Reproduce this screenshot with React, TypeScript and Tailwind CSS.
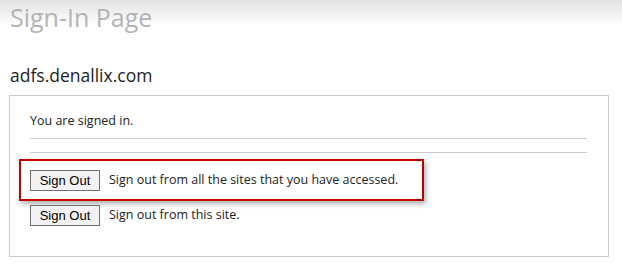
const ui = { fontFamily: '"Open Sans", "Noto Sans", sans-serif' }

function SignOutButton() {
  return (
    <button
      className="h-[21px] w-[70px] shrink-0 border border-[#707070] bg-[#f5f2f5] text-[13px] leading-none text-black"
      style={{ fontFamily: '"Liberation Sans", Arial, sans-serif' }}
    >
      Sign Out
    </button>
  )
}

export default function App() {
  return (
    <div
      className="h-[268px] w-[622px] overflow-hidden bg-[linear-gradient(#e2e2e2,#ffffff_26px)] px-[9px]"
      style={ui}
    >
      <h1 className="pl-[1px] pt-[1px] text-[25px] leading-[33px] text-[#b4b4b4]">Sign-In Page</h1>
      <h2 className="mt-[29px] pl-[1px] text-[17.5px] leading-[24px] text-[#1e1e1e]">adfs.denallix.com</h2>
      <div className="mt-[8px] h-[162px] w-[600px] border border-[#cccccc] pl-[20px] pr-[21px] pt-[16px]">
        <p className="text-[12.5px] leading-[18px] text-[#222]">You are signed in.</p>
        <div className="mt-[8px] border-t border-[#cccccc]" />
        <div className="mt-[13px] border-t border-[#cccccc]" />
        <div className="ml-[-11px] mt-[6px] flex h-[42px] w-[405px] items-center gap-[9px] border-2 border-[#c00000] pl-[9px] shadow-[2px_3px_5px_rgba(0,0,0,0.3)]">
          <SignOutButton />
          <span className="text-[12.5px] text-[#222]">Sign out from all the sites that you have accessed.</span>
        </div>
        <div className="mt-[4px] flex items-center gap-[9px]">
          <SignOutButton />
          <span className="text-[12.5px] text-[#222]">Sign out from this site.</span>
        </div>
      </div>
    </div>
  )
}
